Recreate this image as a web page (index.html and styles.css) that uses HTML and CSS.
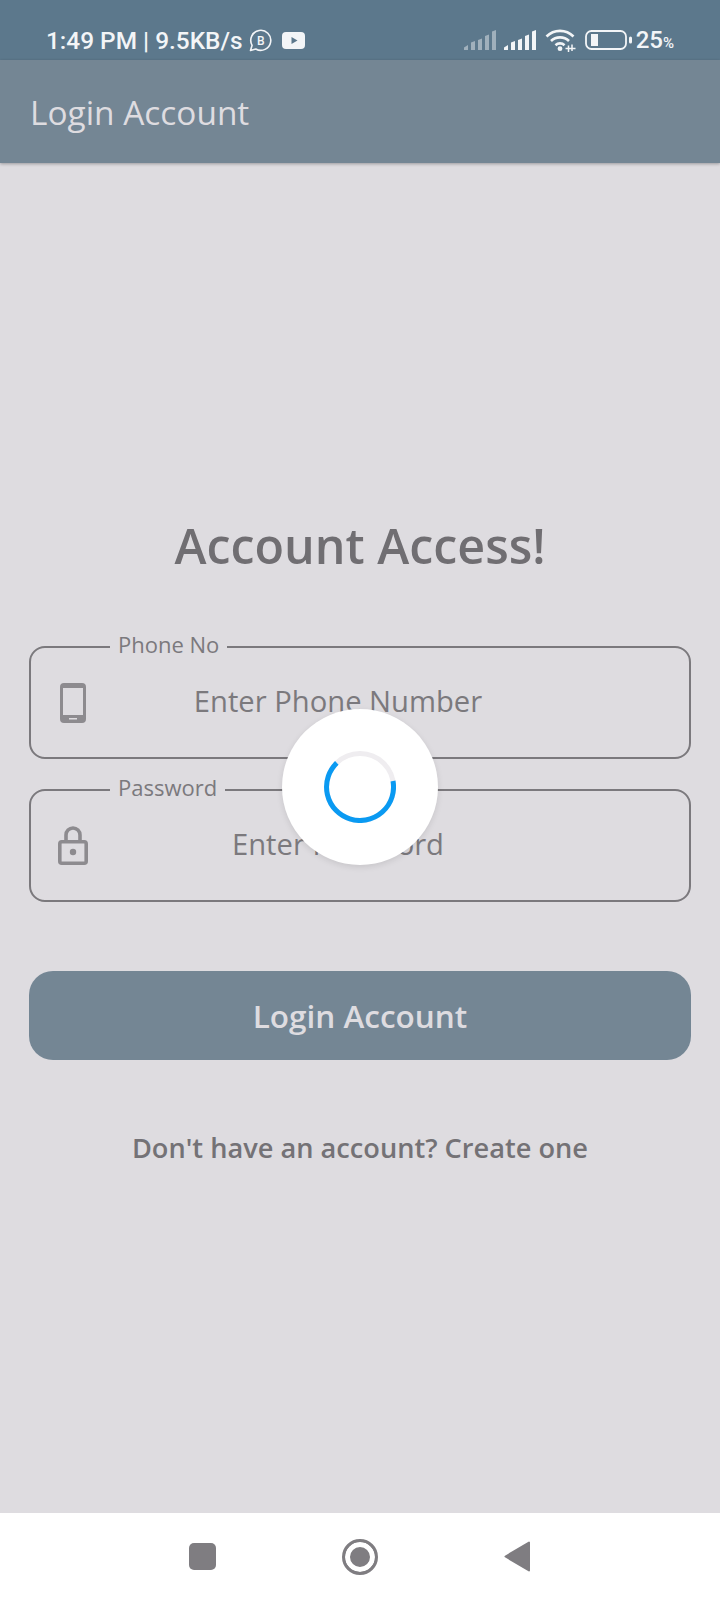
FILE: index.html
```html
<!DOCTYPE html>
<html lang="en">
<head>
  <meta charset="UTF-8">
  <title>Login Account</title>
  <link rel="stylesheet" href="styles.css">
</head>
<body>
  <div class="screen">
    <div class="status-bar">
      <div class="status-left">
        <span class="status-time">1:49 PM | 9.5KB/s</span>
        <svg class="icon-biz" width="23" height="23" viewBox="0 0 23 23">
          <path d="M1.500 21.500l1.600-5.200A10 10 0 1 1 6.800 20z" fill="none" stroke="#f3f5f7" stroke-width="1.600" stroke-linejoin="round"/>
          <text x="11.800" y="15.500" class="biz-letter" text-anchor="middle">B</text>
        </svg>
        <svg class="icon-yt" width="23" height="17" viewBox="0 0 23 17">
          <rect width="23" height="17" rx="4" fill="#f3f5f7"/>
          <path d="M9.500 5l6 3.500-6 3.500z" fill="#5c788c"/>
        </svg>
      </div>
      <div class="status-right">
        <svg class="signal-dim" width="32" height="20" viewBox="0 0 32 20">
          <path d="M0 20v-2.500l4-2.500V20zM7 20v-7.500l4-1.500v9zM14 20V10l4-1.500V20zM21 20V6l4-1.500V20zM28 20V1.500L32 0v20z" fill="#f3f5f7"/>
        </svg>
        <svg width="32" height="20" viewBox="0 0 32 20">
          <path d="M0 20v-2.500l4-2.500V20zM7 20v-7.500l4-1.500v9zM14 20V10l4-1.500V20zM21 20V6l4-1.500V20zM28 20V1.500L32 0v20z" fill="#f3f5f7"/>
        </svg>
        <svg class="icon-wifi" width="32" height="24" viewBox="0 0 32 24">
          <path d="M1.500 8.500a19 19 0 0 1 27 0M6 13a13 13 0 0 1 18 0M10.500 17.200a6.500 6.500 0 0 1 9 0" fill="none" stroke="#f3f5f7" stroke-width="2.600"/>
          <circle cx="15" cy="20.700" r="2.400" fill="#f3f5f7"/>
          <path d="M23.500 17.500v6.500M27 16.500v6.500M20.500 20.500h10" stroke="#f3f5f7" stroke-width="1.500"/>
        </svg>
        <svg class="icon-battery" width="48" height="20" viewBox="0 0 48 20">
          <rect x="1" y="1" width="40" height="18" rx="5.500" fill="none" stroke="#f3f5f7" stroke-width="1.800"/>
          <rect x="6" y="4" width="7" height="12" fill="#f3f5f7"/>
          <rect x="44" y="6.500" width="3" height="7" rx="1.500" fill="#f3f5f7"/>
        </svg>
        <span class="status-battery">25<small>%</small></span>
      </div>
    </div>

    <header class="app-bar">Login Account</header>

    <main class="content">
      <h1>Account Access!</h1>

      <div class="field">
        <label>Phone No</label>
        <span class="field-icon">
          <svg width="26" height="40" viewBox="0 0 26 40">
            <path fill-rule="evenodd" d="M4 0h18a4 4 0 0 1 4 4v32a4 4 0 0 1-4 4H4a4 4 0 0 1-4-4V4a4 4 0 0 1 4-4zM3 5v27h20V5zM9 35v1.500h8V35z" fill="#8d8b8f"/>
          </svg>
        </span>
        <div class="placeholder">Enter Phone Number</div>
      </div>

      <div class="field">
        <label>Password</label>
        <span class="field-icon">
          <svg width="30" height="39" viewBox="0 0 30 39">
            <path d="M8 14V9a7 7 0 0 1 14 0v5" fill="none" stroke="#8d8b8f" stroke-width="3.600"/>
            <rect x="1.800" y="15.800" width="26.400" height="21.400" rx="2" fill="none" stroke="#8d8b8f" stroke-width="3.600"/>
            <circle cx="15" cy="26" r="3.200" fill="#8d8b8f"/>
          </svg>
        </span>
        <div class="placeholder">Enter Password</div>
      </div>

      <button class="login-button">Login Account</button>

      <p class="signup-link">Don't have an account? Create one</p>
    </main>

    <nav class="nav-bar">
      <span class="nav-square"></span>
      <span class="nav-home"></span>
      <svg width="26" height="31" viewBox="0 0 26 31">
        <path d="M25 1.500v28L1.500 15.500z" fill="#7f7d81" stroke="#7f7d81" stroke-width="2" stroke-linejoin="round"/>
      </svg>
    </nav>

    <!-- loading overlay -->
    <div class="loader">
      <svg width="72" height="72" viewBox="0 0 72 72">
        <circle cx="36" cy="36" r="33.500" fill="none" stroke="#efedf0" stroke-width="5"/>
        <path d="M69 30A33.500 33.500 0 1 1 12.800 11.900" fill="none" stroke="#0a9af2" stroke-width="5"/>
      </svg>
    </div>
  </div>
</body>
</html>
```

FILE: styles.css
```css
* {
  box-sizing: border-box;
}

body {
  margin: 0;
  font-family: "Open Sans", sans-serif;
  background-color: #dedce0;
}

.screen {
  position: relative;
  display: flex;
  flex-direction: column;
  width: 720px;
  height: 1600px;
  overflow: hidden;
}

.status-bar {
  display: flex;
  justify-content: space-between;
  align-items: center;
  height: 60px;
  padding: 20px 46px 0;
  background-color: #5c788c;
  color: #f3f5f7;
  font-family: Roboto, sans-serif;
}

.status-left,
.status-right {
  display: flex;
  align-items: center;
}

.status-time {
  font-size: 24.400px;
  font-weight: 500;
}

.icon-biz {
  margin-left: 6px;
}

.icon-yt {
  margin-left: 10px;
}

.biz-letter {
  font-family: Roboto, sans-serif;
  font-size: 12px;
  font-weight: 500;
  fill: #f3f5f7;
}

.status-right {
  gap: 8px;
}

.signal-dim {
  opacity: 0.45;
}

.icon-wifi {
  margin-left: 1px;
}

.status-battery {
  margin-left: -5px;
  font-size: 24px;
  font-weight: 500;
}

.status-battery small {
  font-size: 15px;
}

.app-bar {
  display: flex;
  align-items: center;
  height: 103px;
  padding-left: 30px;
  background-color: #748694;
  color: #dedce0;
  font-size: 33.400px;
  box-shadow: 0 1px 3px rgba(0, 0, 0, 0.3);
}

.content {
  flex: 1;
  display: flex;
  flex-direction: column;
  padding: 350px 29px 0;
}

h1 {
  margin: 0 0 69px;
  color: #706e72;
  font-size: 48.400px;
  font-weight: 600;
  line-height: 64px;
  text-align: center;
}

.field {
  position: relative;
  display: flex;
  align-items: center;
  height: 113px;
  margin-bottom: 30px;
  padding: 0 101px 4px 27px;
  border: 2px solid #7b797d;
  border-radius: 16px;
}

.field label {
  position: absolute;
  left: 79px;
  top: -18px;
  padding: 0 8px;
  background-color: #dedce0;
  color: #7b797d;
  font-size: 22px;
  line-height: 28px;
}

.field-icon {
  display: flex;
  justify-content: center;
  flex-shrink: 0;
  width: 30px;
  margin-top: 4px;
}

.placeholder {
  flex: 1;
  color: #7b797d;
  font-size: 29.200px;
  text-align: center;
}

.login-button {
  height: 89px;
  margin-top: 39px;
  border: none;
  border-radius: 24px;
  background-color: #748694;
  color: #dedce0;
  font-family: "Open Sans", sans-serif;
  font-size: 31.500px;
  font-weight: 600;
}

.signup-link {
  margin: 69px 0 0;
  color: #747276;
  font-size: 27.200px;
  font-weight: 600;
  text-align: center;
}

.nav-bar {
  display: flex;
  justify-content: center;
  align-items: center;
  gap: 126px;
  height: 87px;
  padding-right: 2px;
  background-color: #fff;
}

.nav-square {
  width: 27px;
  height: 27px;
  border-radius: 5px;
  background-color: #7f7d81;
}

.nav-home {
  width: 36px;
  height: 36px;
  border: 3px solid #7f7d81;
  border-radius: 50%;
  background-color: #7f7d81;
  box-shadow: inset 0 0 0 5px #fff;
}

.loader {
  position: absolute;
  left: 282px;
  top: 709px;
  display: flex;
  justify-content: center;
  align-items: center;
  width: 156px;
  height: 156px;
  border-radius: 50%;
  background-color: #fff;
  box-shadow: 0 2px 6px rgba(0, 0, 0, 0.1);
}
```
